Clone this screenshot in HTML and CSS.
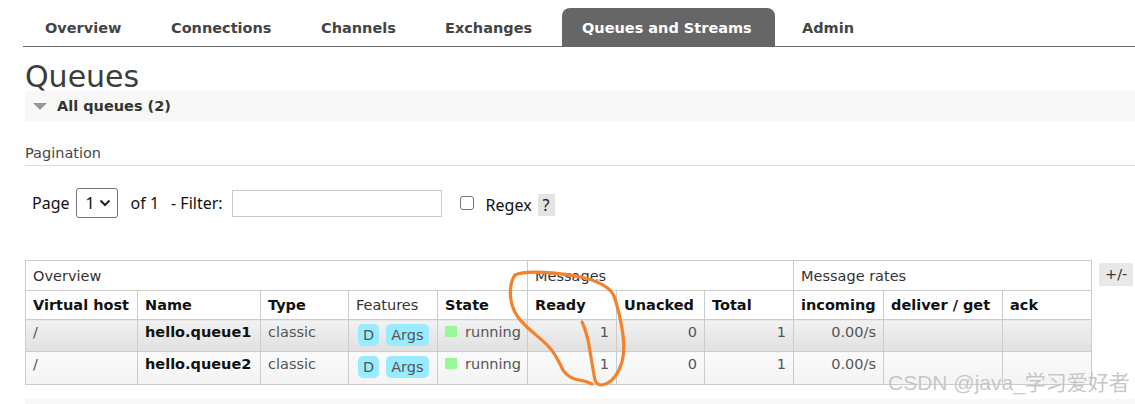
FILE: index.html
```
<!DOCTYPE html>
<html>
<head>
<meta charset="utf-8">
<title>RabbitMQ Management - Queues</title>
<link rel="stylesheet" href="styles.css">
</head>
<body>
<div class="page">
  <nav class="tabs">
    <a class="tab t-overview">Overview</a>
    <a class="tab t-conn">Connections</a>
    <a class="tab t-chan">Channels</a>
    <a class="tab t-exch">Exchanges</a>
    <a class="tab t-queues active">Queues and Streams</a>
    <a class="tab t-admin">Admin</a>
  </nav>
  <main class="main">
    <h1 class="title">Queues</h1>
    <div class="section-bar"><span class="tri"></span><span class="section-title">All queues (2)</span></div>
    <h3 class="subhead">Pagination</h3>
    <div class="pager">
      <span class="lbl">Page</span>
      <span class="select"><span>1</span><svg class="chev" viewBox="0 0 12 8" width="12" height="8"><path d="M1.5 1.5 L6 6 L10.5 1.5" fill="none" stroke="#222" stroke-width="2"/></svg></span>
      <span class="lbl of">of 1</span>
      <span class="lbl filter">- Filter:</span>
      <span class="input"></span>
      <span class="checkbox"></span>
      <span class="lbl regex">Regex</span>
      <span class="help">?</span>
    </div>
    <div class="table-wrap">
      <table class="list">
        <colgroup>
          <col class="c-vh"><col class="c-name"><col class="c-type"><col class="c-feat"><col class="c-state">
          <col class="c-ready"><col class="c-unack"><col class="c-total">
          <col class="c-in"><col class="c-deliver"><col class="c-ack">
        </colgroup>
        <thead>
          <tr class="group">
            <th colspan="5">Overview</th>
            <th colspan="3">Messages</th>
            <th colspan="3">Message rates</th>
          </tr>
          <tr class="heads">
            <th>Virtual host</th>
            <th>Name</th>
            <th>Type</th>
            <th class="plain">Features</th>
            <th>State</th>
            <th>Ready</th>
            <th>Unacked</th>
            <th>Total</th>
            <th>incoming</th>
            <th>deliver / get</th>
            <th>ack</th>
          </tr>
        </thead>
        <tbody>
          <tr class="alt1">
            <td>/</td>
            <td class="qname">hello.queue1</td>
            <td>classic</td>
            <td><span class="badge">D</span><span class="badge">Args</span></td>
            <td><span class="dot"></span>running</td>
            <td class="num">1</td>
            <td class="num">0</td>
            <td class="num">1</td>
            <td class="num">0.00/s</td>
            <td></td>
            <td></td>
          </tr>
          <tr class="alt2">
            <td>/</td>
            <td class="qname">hello.queue2</td>
            <td>classic</td>
            <td><span class="badge">D</span><span class="badge">Args</span></td>
            <td><span class="dot"></span>running</td>
            <td class="num">1</td>
            <td class="num">0</td>
            <td class="num">1</td>
            <td class="num">0.00/s</td>
            <td></td>
            <td></td>
          </tr>
        </tbody>
      </table>
      <span class="toggle">+/-</span>
    </div>
    <div class="section-bar bottom"></div>
  </main>
</div>
<svg class="scribble" width="1135" height="404" viewBox="0 0 1135 404">
  <path d="M515 275 C525 270 560 272 585 278 C600 282 610 287 614 296 C618 308 621 320 623 335 C625 350 623 362 619 370 C615 378 610 384 602 385 C598 385 596 383 595 380 C592 365 590 350 588 340 C586 332 584 326 582 322" fill="none" stroke="#f5812b" stroke-width="3.2" stroke-linecap="round" stroke-linejoin="round"/>
  <path d="M515 275 C510 282 509 295 512 305 C515 315 520 320 526 326 C533 333 543 340 550 348 C556 355 559 362 563 370 C567 377 575 380 584 381 C588 382 590 383 592 384" fill="none" stroke="#f5812b" stroke-width="3.2" stroke-linecap="round" stroke-linejoin="round"/>
</svg>
<div class="watermark">CSDN @java_学习爱好者</div>
</body>
</html>
```
FILE: styles.css
```
html, body {
  margin: 0;
  padding: 0;
  background: #fff;
}
body {
  font-family: "DejaVu Sans", Verdana, sans-serif;
  font-size: 14.5px;
  color: #484848;
  width: 1135px;
  height: 404px;
  overflow: hidden;
  position: relative;
}
.page {
  padding-top: 8px;
}
.tabs {
  display: flex;
  margin-left: 23px;
  height: 38px;
  border-bottom: 1px solid #666;
  padding-left: 2px;
}
.tab {
  display: flex;
  align-items: center;
  box-sizing: border-box;
  padding: 1px 0 0 20px;
  margin-right: 7px;
  font-weight: bold;
  font-size: 14.5px;
  color: #444;
  border-radius: 8px 8px 0 0;
  white-space: nowrap;
}
.t-overview { width: 119px; }
.t-conn { width: 143px; }
.t-chan { width: 117px; }
.t-exch { width: 130px; }
.t-queues { width: 213px; }
.t-admin { width: 94px; }
.tab.active {
  background: #666;
  color: #fff;
}
.main {
  padding-left: 25px;
}
.title {
  margin: 15px 0 0 0;
  font-size: 30px;
  line-height: 29px;
  height: 29px;
  font-weight: normal;
  color: #3c3c3c;
}
.section-bar {
  display: flex;
  align-items: center;
  height: 30px;
  background: #f8f8f8;
  padding-left: 8px;
}
.tri {
  width: 0;
  height: 0;
  border-left: 7px solid transparent;
  border-right: 7px solid transparent;
  border-top: 7px solid #999;
  margin-right: 10px;
}
.section-title {
  font-weight: bold;
  font-size: 14.5px;
  color: #333;
}
.subhead {
  margin: 22px 0 0 0;
  font-size: 14.5px;
  font-weight: normal;
  line-height: 20px;
  padding-bottom: 2px;
  border-bottom: 1px solid #ddd;
  color: #484848;
}
.pager {
  display: flex;
  align-items: center;
  height: 30px;
  margin-top: 22px;
  padding-left: 7px;
  font-family: "Noto Sans", "Open Sans", sans-serif;
  font-size: 16px;
  color: #111;
}
.select {
  display: flex;
  align-items: center;
  justify-content: space-between;
  box-sizing: border-box;
  width: 42px;
  height: 30px;
  border: 1px solid #767676;
  border-radius: 3px;
  margin-left: 6px;
  padding: 0 6px 0 9px;
  font-size: 16px;
}
.of {
  margin-left: 13px;
}
.filter {
  margin-left: 12px;
}
.input {
  box-sizing: border-box;
  width: 210px;
  height: 27px;
  border: 1px solid #c8c8c8;
  margin-left: 9px;
}
.checkbox {
  box-sizing: border-box;
  width: 14px;
  height: 14px;
  border: 1px solid #767676;
  border-radius: 3px;
  margin-left: 18px;
}
.regex {
  margin-left: 12px;
  position: relative;
  top: 2px;
}
.help {
  display: flex;
  align-items: center;
  justify-content: center;
  width: 17px;
  height: 22px;
  background: #e4e4e4;
  margin-left: 6px;
  position: relative;
  top: 2px;
}
.table-wrap {
  display: flex;
  align-items: flex-start;
  margin-top: 42px;
}
.list {
  border-collapse: collapse;
  table-layout: fixed;
  width: 1066px;
  font-size: 14.5px;
}
.c-vh { width: 112px; }
.c-name { width: 123px; }
.c-type { width: 88px; }
.c-feat { width: 89px; }
.c-state { width: 90px; }
.c-ready { width: 89px; }
.c-unack { width: 88px; }
.c-total { width: 89px; }
.c-in { width: 90px; }
.c-deliver { width: 119px; }
.c-ack { width: 89px; }
.list th, .list td {
  border: 1px solid #ccc;
  text-align: left;
  padding: 0 7px;
  white-space: nowrap;
  overflow: hidden;
}
.list tr.group th {
  height: 29px;
  font-weight: normal;
  color: #333;
}
.list tr.heads th {
  height: 28px;
  font-weight: bold;
  color: #111;
}
.list tr.heads th.plain {
  font-weight: normal;
  color: #333;
}
.list td {
  vertical-align: top;
  padding-top: 4px;
  height: 27px;
  color: #555;
}
.list tr.alt2 td {
  height: 28px;
}
.list td.qname {
  font-weight: bold;
  color: #111;
}
.list td.num {
  text-align: right;
  padding-right: 7px;
}
.list tr.alt1 td {
  background: linear-gradient(#f2f2f2, #e0e0e0);
}
.list tr.alt2 td {
  background: linear-gradient(#fbfbfb, #f3f3f3);
}
.badge {
  display: inline-block;
  background: #99ebff;
  border-radius: 5px;
  padding: 0 5px;
  line-height: 22px;
  margin-left: 2px;
  margin-right: 5px;
  color: #555;
}
.dot {
  display: inline-block;
  width: 12px;
  height: 11px;
  background: #98f898;
  margin-right: 8px;
}
.toggle {
  margin-left: 7px;
  margin-top: 3px;
  background: #e8e8e8;
  padding: 0 6px;
  line-height: 23px;
  color: #333;
}
.section-bar.bottom {
  margin-top: 14px;
  height: 10px;
}
.scribble {
  position: absolute;
  left: 0;
  top: 0;
  pointer-events: none;
}
.watermark {
  position: absolute;
  left: 888px;
  top: 366px;
  font-family: "Liberation Sans", "Noto Sans CJK SC", sans-serif;
  font-size: 21px;
  color: rgba(150, 150, 150, 0.55);
  text-shadow: 0 0 1px rgba(255,255,255,0.8);
  white-space: nowrap;
}
```
